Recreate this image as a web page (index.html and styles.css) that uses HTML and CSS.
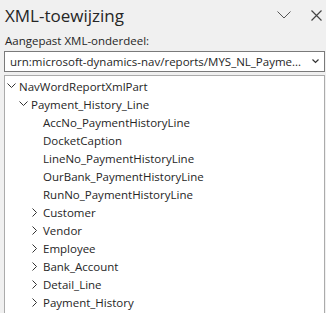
FILE: index.html
```html
<!DOCTYPE html>
<html lang="nl">
<head>
    <meta charset="UTF-8">
    <title>XML-toewijzing</title>
    <link rel="stylesheet" href="styles.css">
</head>
<body>
    <div class="pane">
        <div class="pane-header">
            <div class="pane-title">XML-toewijzing</div>
            <div class="pane-actions">
                <button class="icon-btn" title="Opties">
                    <svg width="14" height="8" viewBox="0 0 14 8"><path d="M0.5 0.5 L7 7 L13.5 0.5" fill="none" stroke="#555" stroke-width="1"/></svg>
                </button>
                <button class="icon-btn" title="Sluiten">
                    <svg width="11" height="11" viewBox="0 0 11 11"><path d="M0.5 0.5 L10.5 10.5 M10.5 0.5 L0.5 10.5" fill="none" stroke="#444" stroke-width="1.2"/></svg>
                </button>
            </div>
        </div>

        <label class="field-label">Aangepast XML-onderdeel:</label>
        <div class="select">
            <span class="select-text">urn:microsoft-dynamics-nav/reports/MYS_NL_Payme...</span>
            <svg class="select-arrow" width="7" height="5" viewBox="0 0 7 5"><path d="M0.5 0.5 L3.5 3.5 L6.5 0.5" fill="none" stroke="#333" stroke-width="1.2"/></svg>
        </div>

        <div class="tree">
            <div class="row lvl-0"><span class="twisty"><svg width="9" height="6" viewBox="0 0 9 6"><path d="M0.5 0.5 L4.5 4.5 L8.5 0.5" fill="none" stroke="#333" stroke-width="1"/></svg></span>NavWordReportXmlPart</div>
            <div class="row lvl-1"><span class="twisty"><svg width="9" height="6" viewBox="0 0 9 6"><path d="M0.5 0.5 L4.5 4.5 L8.5 0.5" fill="none" stroke="#333" stroke-width="1"/></svg></span>Payment_History_Line</div>
            <div class="row lvl-2"><span class="twisty"></span>AccNo_PaymentHistoryLine</div>
            <div class="row lvl-2"><span class="twisty"></span>DocketCaption</div>
            <div class="row lvl-2"><span class="twisty"></span>LineNo_PaymentHistoryLine</div>
            <div class="row lvl-2"><span class="twisty"></span>OurBank_PaymentHistoryLine</div>
            <div class="row lvl-2"><span class="twisty"></span>RunNo_PaymentHistoryLine</div>
            <div class="row lvl-2"><span class="twisty closed"><svg width="6" height="9" viewBox="0 0 6 9"><path d="M0.5 0.5 L4.5 4.5 L0.5 8.5" fill="none" stroke="#333" stroke-width="1"/></svg></span>Customer</div>
            <div class="row lvl-2"><span class="twisty closed"><svg width="6" height="9" viewBox="0 0 6 9"><path d="M0.5 0.5 L4.5 4.5 L0.5 8.5" fill="none" stroke="#333" stroke-width="1"/></svg></span>Vendor</div>
            <div class="row lvl-2"><span class="twisty closed"><svg width="6" height="9" viewBox="0 0 6 9"><path d="M0.5 0.5 L4.5 4.5 L0.5 8.5" fill="none" stroke="#333" stroke-width="1"/></svg></span>Employee</div>
            <div class="row lvl-2"><span class="twisty closed"><svg width="6" height="9" viewBox="0 0 6 9"><path d="M0.5 0.5 L4.5 4.5 L0.5 8.5" fill="none" stroke="#333" stroke-width="1"/></svg></span>Bank_Account</div>
            <div class="row lvl-2"><span class="twisty closed"><svg width="6" height="9" viewBox="0 0 6 9"><path d="M0.5 0.5 L4.5 4.5 L0.5 8.5" fill="none" stroke="#333" stroke-width="1"/></svg></span>Detail_Line</div>
            <div class="row lvl-2"><span class="twisty closed"><svg width="6" height="9" viewBox="0 0 6 9"><path d="M0.5 0.5 L4.5 4.5 L0.5 8.5" fill="none" stroke="#333" stroke-width="1"/></svg></span>Payment_History</div>
        </div>
    </div>
</body>
</html>
```

FILE: styles.css
```css
* {
    margin: 0;
    padding: 0;
    box-sizing: border-box;
}

html, body {
    height: 100%;
}

body {
    font-family: 'Open Sans', 'Noto Sans', sans-serif;
    background: #f0f0f0;
    color: #262626;
    overflow: hidden;
}

.pane {
    height: 100%;
    display: flex;
    flex-direction: column;
    padding: 0 0 0 4px;
}

.pane-header {
    display: flex;
    align-items: center;
    justify-content: space-between;
    height: 30px;
    flex-shrink: 0;
    padding-left: 1px;
}

.pane-title {
    font-size: 17px;
    color: #262626;
}

.pane-actions {
    display: flex;
    align-items: center;
    gap: 20px;
    padding-right: 4px;
}

.icon-btn {
    background: none;
    border: none;
    display: flex;
    align-items: center;
}

.field-label {
    display: block;
    font-size: 11.5px;
    margin-top: 3px;
    padding-left: 1px;
    height: 18px;
    flex-shrink: 0;
}

.select {
    display: flex;
    align-items: center;
    justify-content: space-between;
    height: 21px;
    flex-shrink: 0;
    background: #fff;
    border: 1px solid #7a7a7a;
    margin-right: 1px;
    padding: 0 5px 0 5px;
    font-size: 11.5px;
}

.select-text {
    white-space: nowrap;
}

.tree {
    flex: 1;
    margin-top: 3px;
    margin-right: 1px;
    background: #fff;
    border: 1px solid #ababab;
    border-bottom: none;
    padding-top: 1px;
    font-size: 11.5px;
}

.row {
    display: flex;
    align-items: center;
    height: 18px;
    white-space: nowrap;
}

.lvl-0 { padding-left: 2px; }
.lvl-1 { padding-left: 14px; }
.lvl-2 { padding-left: 26px; }

.twisty {
    width: 12px;
    height: 18px;
    flex-shrink: 0;
    display: flex;
    align-items: center;
}

.twisty.closed {
    padding-left: 1px;
}
```
